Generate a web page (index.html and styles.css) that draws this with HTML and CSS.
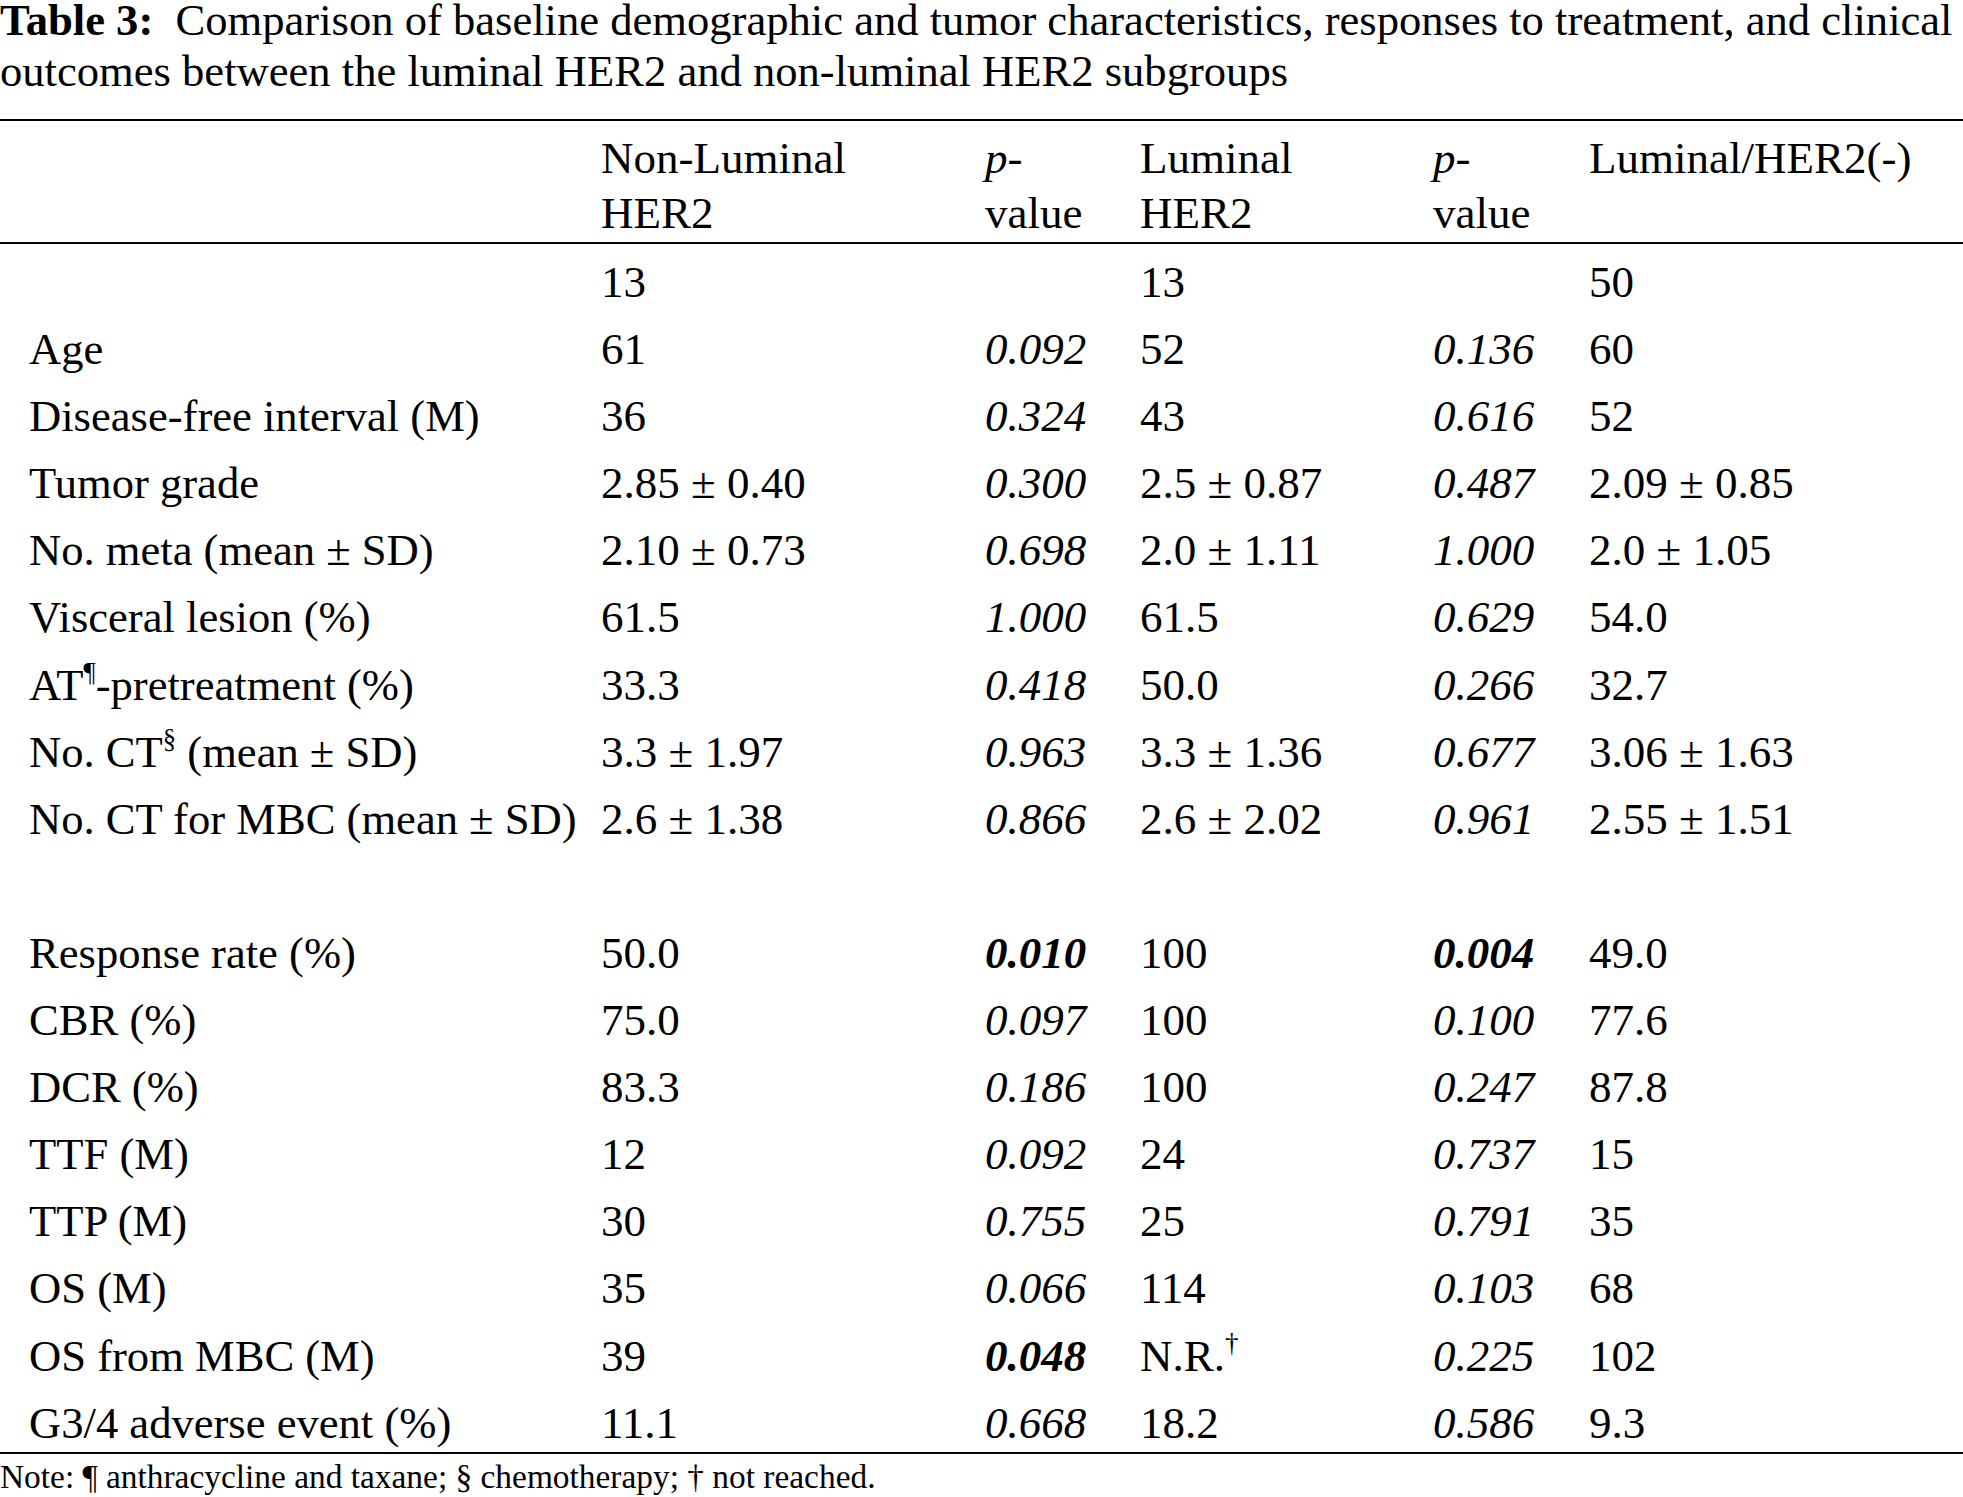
FILE: index.html
```html
<!DOCTYPE html>
<html lang="en">
<head>
<meta charset="utf-8">
<title>Table 3</title>
<link rel="stylesheet" href="styles.css">
</head>
<body>
<div class="page">
  <p class="caption"><b>Table 3:</b>&nbsp; Comparison of baseline demographic and tumor characteristics, responses to treatment, and clinical<br>outcomes between the luminal HER2 and non-luminal HER2 subgroups</p>
  <table class="tbl">
    <colgroup>
      <col class="c-label">
      <col class="c-nonlum">
      <col class="c-p1">
      <col class="c-lum">
      <col class="c-p2">
      <col class="c-neg">
    </colgroup>
    <thead>
      <tr>
        <th></th>
        <th>Non-Luminal<br>HER2</th>
        <th><i>p</i>-<br>value</th>
        <th>Luminal<br>HER2</th>
        <th><i>p</i>-<br>value</th>
        <th>Luminal/HER2(-)</th>
      </tr>
    </thead>
    <tbody>
      <tr><td class="lbl"></td><td>13</td><td class="p"></td><td>13</td><td class="p"></td><td>50</td></tr>
      <tr><td class="lbl">Age</td><td>61</td><td class="p">0.092</td><td>52</td><td class="p">0.136</td><td>60</td></tr>
      <tr><td class="lbl">Disease-free interval (M)</td><td>36</td><td class="p">0.324</td><td>43</td><td class="p">0.616</td><td>52</td></tr>
      <tr><td class="lbl">Tumor grade</td><td>2.85 ± 0.40</td><td class="p">0.300</td><td>2.5 ± 0.87</td><td class="p">0.487</td><td>2.09 ± 0.85</td></tr>
      <tr><td class="lbl">No. meta (mean ± SD)</td><td>2.10 ± 0.73</td><td class="p">0.698</td><td>2.0 ± 1.11</td><td class="p">1.000</td><td>2.0 ± 1.05</td></tr>
      <tr><td class="lbl">Visceral lesion (%)</td><td>61.5</td><td class="p">1.000</td><td>61.5</td><td class="p">0.629</td><td>54.0</td></tr>
      <tr><td class="lbl">AT<sup class="fn">¶</sup>-pretreatment (%)</td><td>33.3</td><td class="p">0.418</td><td>50.0</td><td class="p">0.266</td><td>32.7</td></tr>
      <tr><td class="lbl">No. CT<sup class="fn">§</sup> (mean ± SD)</td><td>3.3 ± 1.97</td><td class="p">0.963</td><td>3.3 ± 1.36</td><td class="p">0.677</td><td>3.06 ± 1.63</td></tr>
      <tr><td class="lbl">No. CT for MBC (mean ± SD)</td><td>2.6 ± 1.38</td><td class="p">0.866</td><td>2.6 ± 2.02</td><td class="p">0.961</td><td>2.55 ± 1.51</td></tr>
      <tr><td class="lbl"></td><td></td><td class="p"></td><td></td><td class="p"></td><td></td></tr>
      <tr><td class="lbl">Response rate (%)</td><td>50.0</td><td class="p sig">0.010</td><td>100</td><td class="p sig">0.004</td><td>49.0</td></tr>
      <tr><td class="lbl">CBR (%)</td><td>75.0</td><td class="p">0.097</td><td>100</td><td class="p">0.100</td><td>77.6</td></tr>
      <tr><td class="lbl">DCR (%)</td><td>83.3</td><td class="p">0.186</td><td>100</td><td class="p">0.247</td><td>87.8</td></tr>
      <tr><td class="lbl">TTF (M)</td><td>12</td><td class="p">0.092</td><td>24</td><td class="p">0.737</td><td>15</td></tr>
      <tr><td class="lbl">TTP (M)</td><td>30</td><td class="p">0.755</td><td>25</td><td class="p">0.791</td><td>35</td></tr>
      <tr><td class="lbl">OS (M)</td><td>35</td><td class="p">0.066</td><td>114</td><td class="p">0.103</td><td>68</td></tr>
      <tr><td class="lbl">OS from MBC (M)</td><td>39</td><td class="p sig">0.048</td><td>N.R.<sup class="fn">†</sup></td><td class="p">0.225</td><td>102</td></tr>
      <tr class="last"><td class="lbl">G3/4 adverse event (%)</td><td>11.1</td><td class="p">0.668</td><td>18.2</td><td class="p">0.586</td><td>9.3</td></tr>
    </tbody>
  </table>
  <p class="note">Note: ¶ anthracycline and taxane; § chemotherapy; † not reached.</p>
</div>
</body>
</html>
```

FILE: styles.css
```css
html, body {
  margin: 0;
  padding: 0;
  background: #ffffff;
}

body {
  font-family: "Liberation Serif", "Times New Roman", serif;
  color: #000000;
  overflow: hidden;
}

.page {
  width: 1963px;
  height: 1497px;
  overflow: hidden;
}

.caption {
  margin: -5px 0 22px 0;
  font-size: 44.6px;
  line-height: 51px;
  white-space: nowrap;
}

.caption b {
  font-weight: bold;
}

.tbl {
  width: 1963px;
  table-layout: fixed;
  border-collapse: separate;
  border-spacing: 0;
  font-size: 45px;
}

.c-label { width: 601px; }
.c-nonlum { width: 384px; }
.c-p1 { width: 155px; }
.c-lum { width: 293px; }
.c-p2 { width: 156px; }
.c-neg { width: 374px; }

.tbl th {
  font-weight: normal;
  text-align: left;
  vertical-align: top;
  line-height: 55px;
  padding: 10px 0 1px 0;
  border-top: 2px solid #000;
  border-bottom: 2px solid #000;
  white-space: nowrap;
}

.tbl td {
  text-align: left;
  vertical-align: top;
  height: 58.1px;
  line-height: 58.1px;
  padding: 9px 0 0 0;
  white-space: nowrap;
}

.tbl td.lbl {
  padding-left: 29px;
  font-size: 44.6px;
}

.tbl td.p {
  font-style: italic;
}

.tbl td.sig {
  font-weight: bold;
}

.tbl tr.last td {
  border-bottom: 2px solid #000;
}

.fn {
  font-size: 0.6em;
  line-height: 0;
  vertical-align: 0.7em;
}

.note {
  margin: 3px 0 0 0;
  font-size: 33.4px;
  line-height: 40px;
  white-space: nowrap;
}
```
